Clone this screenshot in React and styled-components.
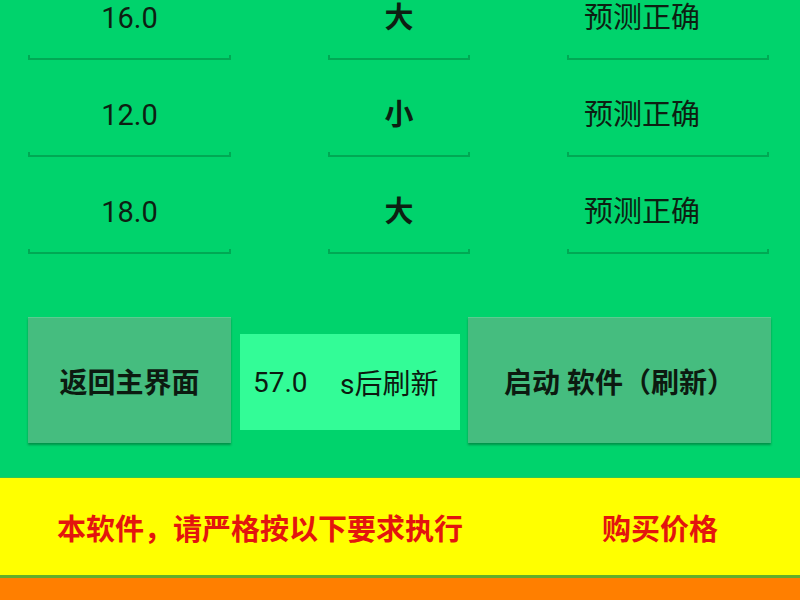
import React from "react";
import styled, { createGlobalStyle } from "styled-components";

const GlobalStyle = createGlobalStyle`
  html, body {
    margin: 0;
    padding: 0;
    background: #00d36c;
    overflow: hidden;
  }
  body {
    font-family: "Roboto", "Noto Sans CJK SC", sans-serif;
  }
`;

const Page = styled.div`
  width: 800px;
  height: 600px;
  display: flex;
  flex-direction: column;
  background: #00d36c;
  overflow: hidden;
`;

const Table = styled.div`
  margin-top: -2px;
  padding: 0 28px;
  display: grid;
  grid-template-columns: 203px 142px 202px;
  column-gap: 97px;
`;

const Cell = styled.div`
  height: 97px;
  display: flex;
  flex-direction: column;
`;

const CellText = styled.div`
  height: 40px;
  line-height: 40px;
  text-align: ${(p) => (p.$left ? "left" : "center")};
  padding-left: ${(p) => (p.$left ? "17px" : "0")};
  font-size: 29px;
  color: #0d1f12;
  font-weight: ${(p) => (p.$bold ? 600 : 400)};
`;

const Underline = styled.div`
  margin-top: 17px;
  height: 5px;
  border: 2px solid rgba(0, 60, 20, 0.28);
  border-top: none;
  box-sizing: border-box;
`;

const ButtonRow = styled.div`
  margin-top: 28px;
  padding-left: 28px;
  display: flex;
  align-items: center;
  gap: 9px;
`;

const ActionButton = styled.div`
  width: ${(p) => p.$width}px;
  height: 126px;
  box-sizing: border-box;
  background: #45bd7f;
  border-top: 1px solid #5ccb90;
  box-shadow: 0 2px 2px rgba(0, 70, 30, 0.45);
  display: flex;
  align-items: center;
  justify-content: center;
  font-size: 28px;
  font-weight: 700;
  color: #0c1a10;
`;

const Countdown = styled.div`
  width: 220px;
  height: 96px;
  margin-top: 4px;
  background: #33fc97;
  display: flex;
  align-items: center;
  padding-left: 13px;
  box-sizing: border-box;
  font-size: 28px;
  color: #0c1a10;
  margin-right: -1px;
`;

const Seconds = styled.span`
  width: 87px;
`;

const Notice = styled.div`
  margin-top: 34px;
  height: 98px;
  background: #ffff00;
  border-top: 1px solid #2fc45a;
  display: flex;
  align-items: center;
  padding-left: 57px;
  box-sizing: border-box;
  font-size: 29px;
  font-weight: 700;
  color: #e3150e;
`;

const NoticeText = styled.span`
  width: 545px;
`;

const Divider = styled.div`
  height: 3px;
  background: #62ae2a;
`;

const Footer = styled.div`
  flex: 1;
  background: #ff7f00;
`;

const rows = [
  ["16.0", "大", "预测正确"],
  ["12.0", "小", "预测正确"],
  ["18.0", "大", "预测正确"],
];

export default function App() {
  return (
    <Page>
      <GlobalStyle />
      <Table>
        {rows.map((row, i) =>
          row.map((value, j) => (
            <Cell key={`${i}-${j}`}>
              <CellText $bold={j === 1} $left={j === 2}>
                {value}
              </CellText>
              <Underline />
            </Cell>
          ))
        )}
      </Table>
      <ButtonRow>
        <ActionButton $width={203}>返回主界面</ActionButton>
        <Countdown>
          <Seconds>57.0</Seconds>s后刷新
        </Countdown>
        <ActionButton $width={303}>启动 软件（刷新）</ActionButton>
      </ButtonRow>
      <Notice>
        <NoticeText>本软件，请严格按以下要求执行</NoticeText>
        购买价格
      </Notice>
      <Divider />
      <Footer />
    </Page>
  );
}
